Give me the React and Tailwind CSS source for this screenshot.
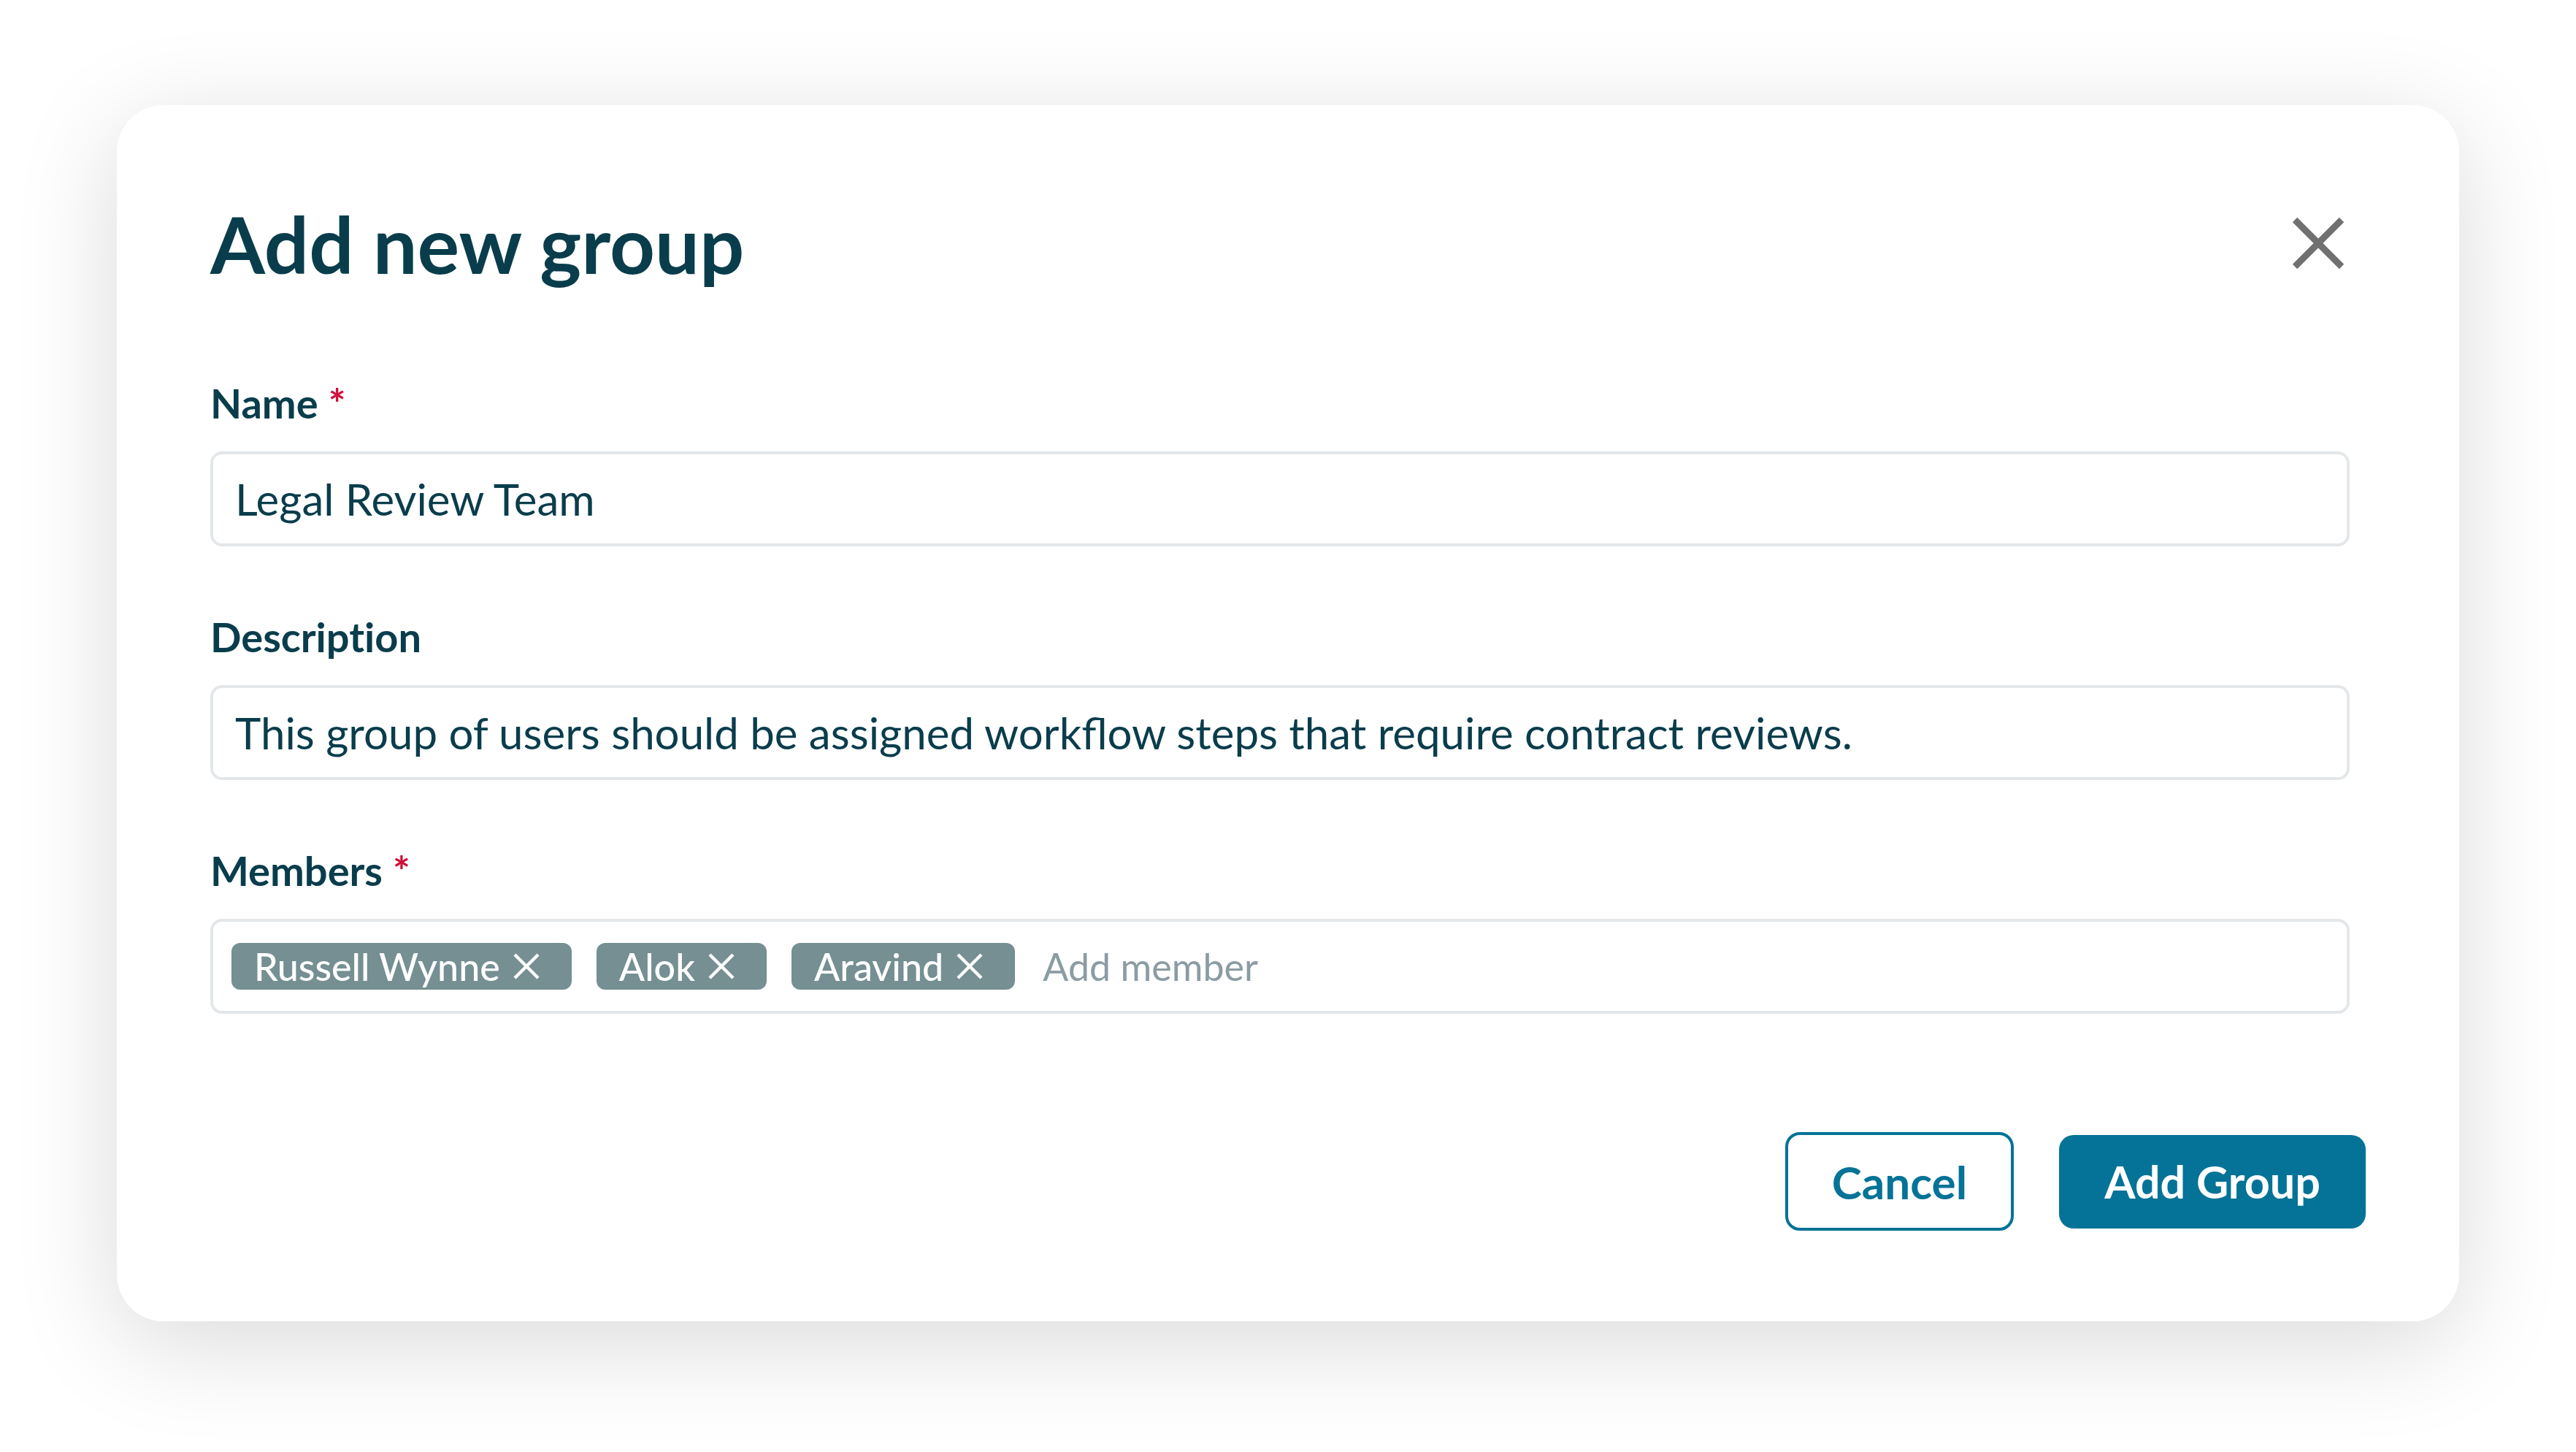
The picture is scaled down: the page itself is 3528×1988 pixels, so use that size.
import React from 'react';

const ink = 'text-[#0a3d4c]';

const Label = ({ children, required, className = '' }) => (
  <div className={`text-[56px] leading-none font-bold ${ink} [font-variant-ligatures:none] ${className}`}>
    {children}
    {required && <span className="text-[#d0103a] ml-[14px]">*</span>}
  </div>
);

const Field = ({ children, className = '' }) => (
  <div
    className={`mt-[38px] mr-[22px] h-[130px] rounded-[16px] border-[4px] border-[#e3e7ea] bg-white flex items-center ${className}`}
  >
    {children}
  </div>
);

const ChipX = () => (
  <svg width="40" height="40" viewBox="0 0 40 40" className="shrink-0">
    <path d="M4 4 L36 36 M36 4 L4 36" stroke="white" strokeWidth="4.5" fill="none" />
  </svg>
);

const Chip = ({ name }) => (
  <div className="h-[64px] rounded-[12px] bg-[#758f93] pl-[31px] pr-[42px] flex items-center gap-[16px] text-white text-[52px] font-medium leading-none">
    <span>{name}</span>
    <ChipX />
  </div>
);

export default function App() {
  const members = ['Russell Wynne', 'Alok', 'Aravind'];

  return (
    <div
      className="min-h-[1988px] bg-white pt-[144px] pl-[160px]"
      style={{ fontFamily: 'Lato, "Open Sans", sans-serif' }}
    >
      <div className="w-[3208px] rounded-[64px] bg-white shadow-[0_30px_140px_rgba(0,0,0,0.15)] pt-[135px] pb-[124px] pl-[128px] pr-[128px]">
        {/* Header */}
        <div className="flex items-center justify-between">
          <h1 className={`text-[108px] leading-none font-bold ${ink}`}>Add new group</h1>
          <button className="mr-[28px] w-[74px] h-[74px]">
            <svg width="74" height="74" viewBox="0 0 74 74">
              <path d="M5 5 L69 69 M69 5 L5 69" stroke="#707070" strokeWidth="9" fill="none" />
            </svg>
          </button>
        </div>

        {/* Name */}
        <Label required className="mt-[137px]">Name</Label>
        <Field className="pl-[30px]">
          <span className={`text-[60px] leading-none ${ink}`}>Legal Review Team</span>
        </Field>

        {/* Description */}
        <Label className="mt-[96px]">Description</Label>
        <Field className="pl-[30px]">
          <span className={`text-[60px] leading-none ${ink}`}>
            This group of users should be assigned workflow steps that require contract reviews.
          </span>
        </Field>

        {/* Members */}
        <Label required className="mt-[96px]">Members</Label>
        <Field className="pl-[25px] gap-[34px]">
          {members.map((m) => (
            <Chip key={m} name={m} />
          ))}
          <span className="ml-[4px] text-[52px] leading-none text-[#8b9ca3]">Add member</span>
        </Field>

        {/* Footer */}
        <div className="mt-[162px] flex items-center justify-end gap-[62px]">
          <button className="h-[135px] w-[313px] rounded-[20px] border-[4px] border-[#047397] text-[#047397] text-[62px] font-bold leading-none">
            Cancel
          </button>
          <button className="h-[128px] w-[420px] rounded-[20px] bg-[#047397] text-white text-[61px] font-bold leading-none">
            Add Group
          </button>
        </div>
      </div>
    </div>
  );
}
